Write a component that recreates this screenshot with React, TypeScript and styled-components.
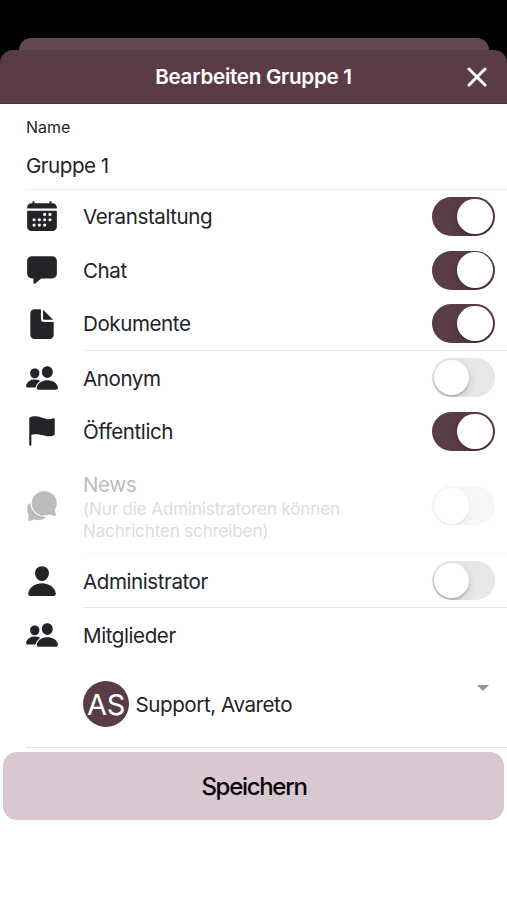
import React from 'react';
import styled, { createGlobalStyle, css } from 'styled-components';
import {
  IoCalendar,
  IoChatbox,
  IoChatbubbles,
  IoDocument,
  IoFlag,
  IoPeople,
  IoPerson,
} from 'react-icons/io5';

const plum = '#5a3c47';

const GlobalStyle = createGlobalStyle`
  * { box-sizing: border-box; }
  body {
    margin: 0;
    background: #000;
    font-family: Inter, 'Liberation Sans', sans-serif;
    color: #222428;
    overflow: hidden;
  }
`;

const Screen = styled.div`
  width: 507px;
  height: 900px;
  padding-top: 38px;
  background: #000;
`;

const PreviousSheet = styled.div`
  height: 24px;
  margin: 0 18px 0 19px;
  border-radius: 12px 12px 0 0;
  background: #62474f;
`;

const Sheet = styled.main`
  position: relative;
  margin-top: -12px;
`;

const Content = styled.div`
  height: 796.5px;
  background: #fff;
`;

const Header = styled.header`
  display: grid;
  grid-template-columns: 62px 1fr 62px;
  align-items: center;
  height: 53.5px;
  border-radius: 13px 13px 0 0;
  background: ${plum};
  box-shadow: inset 0 -1px #4f303c;
  color: #fff;
`;

const Title = styled.h1`
  grid-column: 2;
  margin: 0;
  font-size: 20.6px;
  font-weight: 600;
  text-align: center;
  white-space: nowrap;
  letter-spacing: -0.27px;
`;

const CloseButton = styled.button`
  display: flex;
  justify-content: center;
  padding: 1px 0 0 1px;
  border: 0;
  background: none;
  color: inherit;
`;

const NameField = styled.label`
  display: flex;
  flex-direction: column;
  height: 86px;
  margin-left: 26px;
  padding-top: 13px;
  border-bottom: 1.5px solid #ededed;
`;

const FieldLabel = styled.span`
  font-size: 16px;
  line-height: 20px;
  letter-spacing: -0.05px;
`;

const FieldValue = styled.span`
  margin-top: 16px;
  font-size: 20.6px;
  line-height: 26px;
  letter-spacing: -0.5px;
`;

const Row = styled.div<{ $disabled?: boolean }>`
  display: flex;
  height: ${(p) => (p.$disabled ? 96 : 53.75)}px;
  padding-left: 25px;
  opacity: ${(p) => (p.$disabled ? 0.3 : 1)};
`;

const RowIcon = styled.span`
  display: flex;
  align-items: center;
  flex: none;
  width: 58px;
  svg { width: 34px; height: 34px; }
`;

const RowBody = styled.div<{ $line?: boolean }>`
  display: flex;
  align-items: center;
  justify-content: space-between;
  flex: 1;
  padding-right: 12px;
  ${(p) => p.$line && css`border-bottom: 1.5px solid #e6e6e6;`}
`;

const Label = styled.div`
  padding-top: 2px;
  font-size: 20.6px;
  line-height: 26px;
  white-space: nowrap;
  letter-spacing: -0.44px;
`;

const Hint = styled.div`
  font-size: 17px;
  line-height: 22px;
  color: #8e8e92;
  letter-spacing: -0.13px;
`;

const Track = styled.span<{ $on?: boolean }>`
  display: flex;
  align-items: center;
  justify-content: ${(p) => (p.$on ? 'flex-end' : 'flex-start')};
  flex: none;
  width: 63px;
  height: 39px;
  padding: 0 2px 0 1.5px;
  border-radius: 20px;
  background: ${(p) => (p.$on ? plum : '#e7e7e7')};
  overflow: hidden;
`;

const Knob = styled.span`
  width: 35.6px;
  height: 35.6px;
  border-radius: 50%;
  background: #fff;
  box-shadow: 0 3px 9px rgba(0, 0, 0, 0.16), 0 2px 2px rgba(0, 0, 0, 0.14);
`;

const Member = styled.div`
  display: flex;
  align-items: center;
  height: 86px;
  margin-left: 26px;
  padding-left: 57px;
  border-bottom: 1.5px solid #e5e0e2;
`;

const Avatar = styled.span`
  display: flex;
  align-items: center;
  justify-content: center;
  width: 46px;
  height: 46px;
  margin-right: 6.5px;
  border-radius: 50%;
  background: ${plum};
  color: #fff;
  font-size: 29px;
  letter-spacing: -0.2px;
`;

const Caret = styled.span`
  margin: -32px 18px 0 auto;
  border: 6px solid transparent;
  border-top-color: #929292;
  border-bottom: 0;
`;

const SaveButton = styled.button`
  display: block;
  width: 501px;
  height: 68px;
  margin: 4.5px 3px 0;
  padding: 0 0 0 1px;
  border: 0;
  border-radius: 14px;
  background: #d9c8d1;
  color: #090507;
  font-family: inherit;
  font-size: 24px;
  font-weight: 500;
  letter-spacing: -1.3px;
`;

interface Setting {
  label: string;
  icon: React.ReactNode;
  on?: boolean;
  line?: boolean;
  disabled?: boolean;
  hint?: React.ReactNode;
}

const settings: Setting[] = [
  { label: 'Veranstaltung', icon: <IoCalendar />, on: true },
  { label: 'Chat', icon: <IoChatbox />, on: true },
  { label: 'Dokumente', icon: <IoDocument />, on: true, line: true },
  { label: 'Anonym', icon: <IoPeople /> },
  { label: 'Öffentlich', icon: <IoFlag />, on: true },
  {
    label: 'News',
    icon: <IoChatbubbles />,
    line: true,
    disabled: true,
    hint: <>(Nur die Administratoren können<br />Nachrichten schreiben)</>,
  },
  { label: 'Administrator', icon: <IoPerson />, line: true },
];

export default function App() {
  return (
    <>
      <GlobalStyle />
      <Screen>
        <PreviousSheet />
        <Sheet>
          <Header>
            <Title>Bearbeiten Gruppe 1</Title>
            <CloseButton aria-label="Schließen">
              <svg width="20" height="20" viewBox="0 0 20 20" fill="none" stroke="currentColor" strokeWidth="3" strokeLinecap="round">
                <path d="M2 2l16 16M18 2L2 18" />
              </svg>
            </CloseButton>
          </Header>
          <Content>
            <NameField>
              <FieldLabel>Name</FieldLabel>
              <FieldValue>Gruppe 1</FieldValue>
            </NameField>
            {settings.map((s) => (
              <Row key={s.label} $disabled={s.disabled}>
                <RowIcon>{s.icon}</RowIcon>
                <RowBody $line={s.line}>
                  <div>
                    <Label>{s.label}</Label>
                    {s.hint && <Hint>{s.hint}</Hint>}
                  </div>
                  <Track $on={s.on}><Knob /></Track>
                </RowBody>
              </Row>
            ))}
            <Row>
              <RowIcon><IoPeople /></RowIcon>
              <RowBody><Label>Mitglieder</Label></RowBody>
            </Row>
            <Member>
              <Avatar>AS</Avatar>
              <Label>Support, Avareto</Label>
              <Caret />
            </Member>
            <SaveButton>Speichern</SaveButton>
          </Content>
        </Sheet>
      </Screen>
    </>
  );
}
